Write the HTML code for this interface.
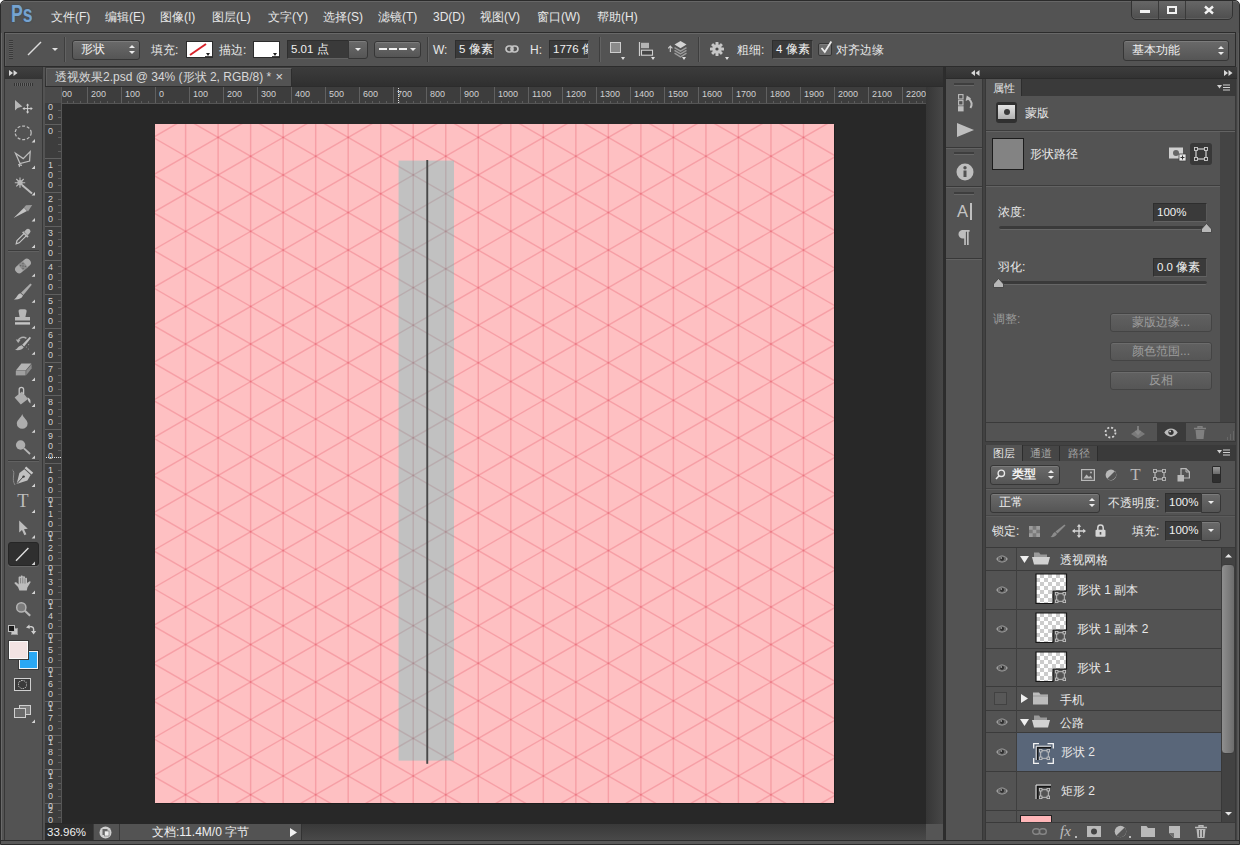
<!DOCTYPE html>
<html lang="zh">
<head>
<meta charset="utf-8">
<title>Photoshop</title>
<style>
*{box-sizing:border-box;margin:0;padding:0}
html,body{width:1240px;height:845px;overflow:hidden;background:#fff;font-family:"Liberation Sans",sans-serif}
body{font-family:"Liberation Sans",sans-serif;font-size:12px;color:#e6e6e6;position:relative}
.abs{position:absolute}
#win{position:absolute;left:0;top:0;width:1240px;height:845px;background:#535353;border-radius:5px 5px 0 0;overflow:hidden;border:1px solid #2b2b2b;box-shadow:inset 1px 1px 0 #6a6a6a,inset -1px 0 0 #5c5c5c}
#win>*{margin-left:-1px;margin-top:-1px}
.t{position:absolute;white-space:nowrap;line-height:14px;font-size:12px;color:#e8e8e8}
.dim{color:#9a9a9a}
.fld{position:absolute;background:#3a3a3a;border:1px solid #2e2e2e;border-bottom-color:#626262;border-right-color:#5a5a5a;color:#f0f0f0;font-size:11.5px;line-height:17px;padding-left:3px;white-space:nowrap;overflow:hidden}
.btn{position:absolute;border:1px solid #363636;border-radius:3px;background:linear-gradient(#6a6a6a,#555);box-shadow:inset 0 1px 0 #7c7c7c;color:#f0f0f0;font-size:12px;white-space:nowrap}
.sep{position:absolute;width:2px;border-left:1px solid #3e3e3e;border-right:1px solid #626262}
.hline{position:absolute;height:2px;border-top:1px solid #3c3c3c;border-bottom:1px solid #616161}
svg{position:absolute;overflow:visible}
.ud{position:absolute;width:7px;height:10px}
.ud:before,.ud:after{content:"";position:absolute;left:0;border-left:3.5px solid transparent;border-right:3.5px solid transparent}
.ud:before{top:0.5px;border-bottom:3.5px solid #ececec}
.ud:after{bottom:0.5px;border-top:3.5px solid #ececec}
.dn{position:absolute;width:0;height:0;border-left:3px solid transparent;border-right:3px solid transparent;border-top:3.5px solid #ececec}
.corner{position:absolute;width:0;height:0;border-left:4px solid transparent;border-bottom:4px solid #d0d0d0}
</style>
</head>
<body>
<div id="win">
<!-- ===== menu / title bar ===== -->
<div class="abs" style="left:1px;top:1px;width:1238px;height:32px;background:#535353;border-top:1px solid #666;border-radius:4px 4px 0 0"></div>
<div class="abs" style="left:11px;top:2px;font-size:23.5px;line-height:25px;font-weight:bold;color:#76a3d0;text-shadow:0 0 2px #2b425a;transform:scaleX(.75);transform-origin:0 0">Ps</div>
<div class="t" style="left:51px;top:10px">文件(F)</div>
<div class="t" style="left:105px;top:10px">编辑(E)</div>
<div class="t" style="left:160px;top:10px">图像(I)</div>
<div class="t" style="left:212px;top:10px">图层(L)</div>
<div class="t" style="left:268px;top:10px">文字(Y)</div>
<div class="t" style="left:323px;top:10px">选择(S)</div>
<div class="t" style="left:378px;top:10px">滤镜(T)</div>
<div class="t" style="left:433px;top:10px">3D(D)</div>
<div class="t" style="left:480px;top:10px">视图(V)</div>
<div class="t" style="left:537px;top:10px">窗口(W)</div>
<div class="t" style="left:597px;top:10px">帮助(H)</div>
<!-- window controls -->
<div class="abs" style="left:1131px;top:-1px;width:102px;height:21px;border:1px solid #333;border-radius:0 0 5px 5px;background:linear-gradient(#686868,#4e4e4e);box-shadow:inset 0 -1px 0 #5f5f5f"></div>
<div class="abs" style="left:1158px;top:0;width:1px;height:19px;background:#3a3a3a"></div>
<div class="abs" style="left:1185px;top:0;width:1px;height:19px;background:#3a3a3a"></div>
<div class="abs" style="left:1140px;top:10px;width:10px;height:3px;background:#f2f2f2"></div>
<div class="abs" style="left:1167px;top:6px;width:10px;height:8px;border:2px solid #f2f2f2"></div>
<svg style="left:1204px;top:6px" width="10" height="8" viewBox="0 0 10 8"><path d="M1 0.5 L9 7.5 M9 0.5 L1 7.5" stroke="#f2f2f2" stroke-width="2.4" fill="none"/></svg>
<!-- ===== options bar ===== -->
<div class="abs" style="left:4px;top:32px;width:1232px;height:35px;background:#535353;border:1px solid #2c2c2c;box-shadow:inset 0 1px 0 #686868,inset 1px 0 0 #5e5e5e"></div>
<div class="abs" style="left:9px;top:40px;width:4px;height:19px;background:repeating-linear-gradient(#3a3a3a 0 1px,#5e5e5e 1px 2px)"></div>
<svg style="left:27px;top:41px" width="15" height="15" viewBox="0 0 15 15"><path d="M1 14 L14 1" stroke="#dcdcdc" stroke-width="1.4"/></svg>
<div class="dn" style="left:52px;top:48px;border-top-color:#e0e0e0"></div>
<div class="sep" style="left:64px;top:37px;height:25px"></div>
<div class="btn" style="left:72px;top:40px;width:68px;height:20px;line-height:17px;padding-left:8px">形状</div>
<div class="ud" style="left:129px;top:44px"></div>
<div class="t" style="left:151px;top:43px">填充:</div>
<div class="abs" style="left:186px;top:41px;width:27px;height:17px;background:#fff;border:1px solid #2c2c2c"></div>
<svg style="left:188px;top:43px" width="20" height="13" viewBox="0 0 20 13"><path d="M2 12 L18 1" stroke="#d8232a" stroke-width="2"/></svg>
<div class="abs" style="left:205px;top:56px;width:7px;height:1px;background:#444"></div>
<div class="dn" style="left:206px;top:53px;border-width:3px 2.5px 0 2.5px;border-top-color:#222"></div>
<div class="t" style="left:219px;top:43px">描边:</div>
<div class="abs" style="left:253px;top:41px;width:27px;height:17px;background:#fff;border:1px solid #2c2c2c"></div>
<div class="abs" style="left:272px;top:56px;width:7px;height:1px;background:#444"></div>
<div class="dn" style="left:273px;top:53px;border-width:3px 2.5px 0 2.5px;border-top-color:#222"></div>
<div class="fld" style="left:287px;top:40px;width:62px;height:19px">5.01 点</div>
<div class="btn" style="left:348px;top:40px;width:20px;height:19px;border-radius:0 3px 3px 0"></div>
<div class="dn" style="left:355px;top:48px"></div>
<div class="btn" style="left:374px;top:41px;width:47px;height:17px"></div>
<div class="abs" style="left:379px;top:48px;width:28px;height:2px;background:repeating-linear-gradient(90deg,#f0f0f0 0 8px,transparent 8px 10px)"></div>
<div class="dn" style="left:410px;top:48px"></div>
<div class="sep" style="left:427px;top:37px;height:25px"></div>
<div class="t" style="left:433px;top:43px">W:</div>
<div class="fld" style="left:455px;top:40px;width:40px;height:19px">5 像素</div>
<svg style="left:505px;top:45px" width="14" height="8" viewBox="0 0 14 8"><rect x="1" y="1" width="7" height="6" rx="3" fill="none" stroke="#c4c4c4" stroke-width="1.7"/><rect x="6" y="1" width="7" height="6" rx="3" fill="none" stroke="#c4c4c4" stroke-width="1.7"/></svg>
<div class="t" style="left:530px;top:43px">H:</div>
<div class="fld" style="left:549px;top:40px;width:40px;height:19px">1776 像</div>
<div class="sep" style="left:599px;top:37px;height:25px"></div>
<!-- path ops icons -->
<div class="abs" style="left:610px;top:42px;width:11px;height:11px;background:#8a8a8a;border:1px solid #cdcdcd"></div>
<div class="dn" style="left:621px;top:57px;border-width:3px 2px 0 2px;border-top-color:#e0e0e0"></div>
<svg style="left:638px;top:41px" width="16" height="16" viewBox="0 0 16 16"><path d="M1.5 1 V15" stroke="#cfcfcf" stroke-width="1.2"/><rect x="3" y="1.8" width="8" height="5.4" fill="#b4b4b4"/><rect x="3.5" y="9.2" width="11" height="5" fill="#454545" stroke="#cfcfcf" stroke-width="1.1"/></svg>
<div class="dn" style="left:651px;top:57px;border-width:3px 2px 0 2px;border-top-color:#e0e0e0"></div>
<svg style="left:667px;top:40px" width="20" height="18" viewBox="0 0 20 18"><path d="M3.3 6 V12 M1.2 8.3 L3.3 6 L5.4 8.3" stroke="#cfcfcf" stroke-width="1.1" fill="none"/><path d="M13.5 1 L19.5 4.6 L13.5 8.2 L7.5 4.6Z" fill="#d4d4d4"/><path d="M7.5 7.6 L13.5 11.2 L19.5 7.6 M7.5 10.4 L13.5 14 L19.5 10.4 M7.5 13.2 L13.5 16.8 L19.5 13.2" fill="none" stroke="#9a9a9a" stroke-width="1.5"/></svg>
<div class="dn" style="left:682px;top:57px;border-width:3px 2px 0 2px;border-top-color:#e0e0e0"></div>
<div class="sep" style="left:698px;top:37px;height:25px"></div>
<!-- gear -->
<svg style="left:709px;top:41px" width="16" height="16" viewBox="0 0 16 16"><g transform="translate(8 8)"><circle r="4.6" fill="#c6c6c6"/><g fill="#c6c6c6"><rect x="-1.5" y="-7" width="3" height="14" rx=".6"/><rect x="-1.5" y="-7" width="3" height="14" rx=".6" transform="rotate(45)"/><rect x="-1.5" y="-7" width="3" height="14" rx=".6" transform="rotate(90)"/><rect x="-1.5" y="-7" width="3" height="14" rx=".6" transform="rotate(135)"/></g><circle r="1.6" fill="#4a4a4a"/></g></svg>
<div class="dn" style="left:725px;top:57px;border-width:3px 2px 0 2px;border-top-color:#e0e0e0"></div>
<div class="t" style="left:737px;top:43px">粗细:</div>
<div class="fld" style="left:772px;top:40px;width:41px;height:19px">4 像素</div>
<div class="abs" style="left:818px;top:43px;width:14px;height:13px;background:#6c6c6c;border:1px solid #363636;border-radius:2px;box-shadow:inset 0 1px 0 #7d7d7d"></div>
<svg style="left:819px;top:40px" width="14" height="15" viewBox="0 0 14 15"><path d="M2.5 8 L5.8 12 L12.3 1.5" fill="none" stroke="#ececec" stroke-width="1.8"/></svg>
<div class="t" style="left:836px;top:43px">对齐边缘</div>
<div class="btn" style="left:1123px;top:40px;width:106px;height:21px;line-height:18px;padding-left:8px">基本功能</div>
<div class="ud" style="left:1218px;top:45px"></div>
<!-- ===== left toolbar ===== -->
<div class="abs" style="left:4px;top:67px;width:39px;height:774px;background:#535353;border:1px solid #383838"></div>
<div class="abs" style="left:5px;top:67px;width:37px;height:12px;background:linear-gradient(#404040,#343434)"></div>
<svg style="left:9px;top:70px" width="9" height="6" viewBox="0 0 9 6"><path d="M0 0L4 3L0 6Z M4.5 0L8.5 3L4.5 6Z" fill="#d8d8d8"/></svg>
<div class="abs" style="left:14px;top:83px;width:19px;height:3px;background:repeating-linear-gradient(90deg,#333 0 1px,#666 1px 2px)"></div>
<div class="hline" style="left:8px;top:250px;width:31px"></div>
<div class="hline" style="left:8px;top:460px;width:31px"></div>
<div class="abs" style="left:8px;top:542px;width:31px;height:24px;background:#2f2f2f;border:1px solid #262626;border-radius:3px;box-shadow:0 1px 0 #676767"></div>
<svg style="left:0;top:0" width="45" height="845" viewBox="0 0 45 845">
<g fill="#b7b7b7" stroke="none">
<!-- move -->
<path d="M15 100 L15 110.4 L17.6 108 L22.4 106.6Z"/>
<path d="M27.6 104.4 V112.8 M23.4 108.6 H31.8" stroke="#d0d0d0" stroke-width="1" fill="none"/>
<path d="M27.6 103.4 L26 105.6 H29.2Z M27.6 113.8 L26 111.6 H29.2Z M22.4 108.6 L24.6 107 V110.2Z M32.8 108.6 L30.6 107 V110.2Z" fill="#d0d0d0"/>
<!-- ellipse marquee -->
<ellipse cx="23.2" cy="132.8" rx="8" ry="6.8" fill="none" stroke="#bdbdbd" stroke-width="1.25" stroke-dasharray="3 1.8"/>
<!-- poly lasso -->
<path d="M15.5 153.3 L23.2 158.6 L30.2 151.6 L29.6 161 L20 163.6 Z" fill="none" stroke="#bdbdbd" stroke-width="1.25"/>
<path d="M20 163.6 L19.2 167 M18 164.6 L22 165.4" fill="none" stroke="#bdbdbd" stroke-width="1.1"/>
<!-- wand -->
<path d="M22 185 L32 193.4" stroke="#bdbdbd" stroke-width="2" fill="none"/>
<path d="M20 177.6 V187.8 M14.8 182.7 H25.2 M16.3 179 L23.7 186.4 M23.7 179 L16.3 186.4" stroke="#bdbdbd" stroke-width="1.1" fill="none"/>
<circle cx="20" cy="182.7" r="2.6"/>
<!-- slice knife -->
<path d="M13.6 218 L24 207.8 L27 211 Z" fill="#c4c4c4"/>
<path d="M24 207.4 L26 205.2 L32.2 205 L28 211.4 Z" fill="#9a9a9a"/>
<!-- eyedropper -->
<path d="M26.2 229.6 a2.4 2.4 0 0 1 3.6 3.4 L27.8 235.2 L24.2 231.8Z"/>
<path d="M22.6 231.8 L28 237" stroke="#b7b7b7" stroke-width="1.8" fill="none"/>
<path d="M24 233.6 L17 240.6 L16.2 243.8 L19.2 242.8 L26.2 235.8" fill="none" stroke="#c4c4c4" stroke-width="1.2"/>
<!-- healing -->
<g transform="rotate(-40 23 266)"><rect x="14" y="262" width="18" height="8" rx="4" fill="#aaaaaa"/><rect x="20" y="262" width="6" height="8" fill="#8c8c8c"/><g fill="#5a5a5a"><circle cx="21.6" cy="264.2" r=".6"/><circle cx="24.4" cy="264.2" r=".6"/><circle cx="21.6" cy="267.8" r=".6"/><circle cx="24.4" cy="267.8" r=".6"/><circle cx="23" cy="266" r=".6"/></g></g>
<!-- brush -->
<path d="M30.4 283.4 L31.8 284.8 L23.4 295 L21 292.8Z" fill="#aaaaaa"/>
<path d="M20.4 293.2 L23 295.6 C21.5 299.4 17 300 13.8 299.4 C16.6 298.6 17 294.4 20.4 293.2Z" fill="#c0c0c0"/>
<!-- stamp -->
<path d="M20.8 309.2 h3.6 a2.2 2.2 0 0 1 2.2 2.4 L25.4 317 h4.6 v3.6 h-15 v-3.6 h4.6 L18.6 311.6 a2.2 2.2 0 0 1 2.2 -2.4Z"/>
<rect x="15" y="322.2" width="15" height="2.4" fill="#c4c4c4"/>
<!-- history brush -->
<path d="M29.8 336.8 L31 338 L24.2 346.6 L22.2 344.8Z" fill="#c0c0c0"/>
<path d="M21.6 345.2 L23.8 347.2 C22.5 350 18 350.6 14.8 349.8 C17.6 349 18 346 21.6 345.2Z"/>
<path d="M18 341 A5.4 5.4 0 0 1 26.4 338.4" fill="none" stroke="#b0b0b0" stroke-width="1.4"/>
<path d="M15.8 339.6 L18.2 343 L20.6 339.8Z" fill="#b0b0b0"/>
<circle cx="26.4" cy="347" r=".6" fill="#999"/><circle cx="28.6" cy="344.6" r=".6" fill="#999"/><circle cx="28.4" cy="349" r=".6" fill="#999"/>
<!-- eraser -->
<path d="M21.4 363.6 L31.4 363.6 L25.6 370.4 L15.8 370.4Z" fill="#b4b4b4"/>
<path d="M15.8 371 L25.6 371 L25.6 375.4 L15.8 375.4Z" fill="#a0a0a0"/>
<path d="M26.2 370.6 L31.6 364.2 L31.6 368.4 L26.2 375.2Z" fill="#8a8a8a"/>
<!-- bucket -->
<path d="M14.6 397.4 L22 391.6 L28 399 L20.8 404.6Z" fill="#adadad"/>
<path d="M19.2 394.4 V389.6 a2.2 2.2 0 0 1 4.4 0 V394" fill="none" stroke="#c4c4c4" stroke-width="1.3"/>
<path d="M27.4 397.4 C30.4 398.2 30.8 400.6 30.4 403.4 C28.6 402 27.8 400 27.4 397.4Z" fill="#c4c4c4"/>
<!-- blur drop -->
<path d="M22.2 414 C23.4 418 27.6 420 27.6 423.4 A5.4 5.4 0 0 1 16.8 423.4 C16.8 420 21 418 22.2 414Z" fill="#aeaeae"/>
<!-- dodge -->
<circle cx="20.6" cy="445" r="4.7" fill="#aeaeae"/>
<path d="M24 448.4 L30 454" stroke="#b7b7b7" stroke-width="1.8" fill="none"/>
<!-- pen -->
<path d="M16.6 484 L19.4 473 L24.4 469.2 L30.6 475 L27.4 480.6 Z" fill="#c0c0c0"/>
<path d="M25.4 467.4 L32.4 473.6" stroke="#c8c8c8" stroke-width="2.4" fill="none"/>
<path d="M17 483.6 L23.4 476.6" stroke="#4a4a4a" stroke-width="1" fill="none"/>
<circle cx="23.6" cy="476.6" r="1.2" fill="#3e3e3e"/>
<path d="M12.4 470 C16 472 11 479 15 485" fill="none" stroke="#8a8a8a" stroke-width="1"/>
<!-- path select arrow -->
<path d="M19.2 520.6 L19.2 532.6 L22 530 L24.4 535.2 L26.4 534.2 L24 529.2 L27.8 528.8Z" fill="#bdbdbd"/>
<!-- line tool -->
<path d="M16 560.8 L28.4 548" stroke="#dedede" stroke-width="1.4" fill="none"/>
<!-- hand -->
<path d="M19.4 590.6 L18 587 L14.6 583.6 C14.2 582.4 15.6 581.8 16.6 582.6 L18.6 584.4 V577.6 C18.6 576.2 20.6 576.2 20.6 577.6 V576.6 C20.6 575.2 22.8 575.2 22.8 576.6 V577.2 C22.8 575.8 25 575.8 25 577.2 V578.6 C25 577.4 27 577.4 27 578.6 V583 L29.4 581.4 C30.4 580.8 31 581.8 30.4 582.6 L27.4 587.4 L26.8 590.6Z" fill="#bdbdbd"/>
<path d="M20.6 578 V583.4 M22.8 577.4 V583.4 M25 578.4 V583.6" stroke="#6a6a6a" stroke-width=".7" fill="none"/>
<!-- zoom -->
<circle cx="21.3" cy="607.4" r="4.6" fill="#7c7c7c" stroke="#b4b4b4" stroke-width="1.5"/>
<path d="M24.8 610.8 L30.2 615.8" stroke="#b7b7b7" stroke-width="2.2" fill="none"/>
<!-- corner marks -->
<g fill="#d4d4d4">
<path d="M35 139 V142.4 H31.6Z"/><path d="M35 165.6 V169 H31.6Z"/><path d="M35 192 V195.4 H31.6Z"/><path d="M35 218 V221.4 H31.6Z"/><path d="M35 244.6 V248 H31.6Z"/>
<path d="M35 273.4 V276.8 H31.6Z"/><path d="M35 299.4 V302.8 H31.6Z"/><path d="M35 325.4 V328.8 H31.6Z"/><path d="M35 351.4 V354.8 H31.6Z"/><path d="M35 377.6 V381 H31.6Z"/><path d="M35 403.6 V407 H31.6Z"/>
<path d="M35 429.4 V432.8 H31.6Z"/><path d="M35 455.4 V458.8 H31.6Z"/><path d="M35 483.6 V487 H31.6Z"/><path d="M35 509.6 V513 H31.6Z"/><path d="M35 535 V538.4 H31.6Z"/><path d="M35 561.6 V565 H31.6Z"/><path d="M35 590.6 V594 H31.6Z"/><path d="M35 719.6 V723 H31.6Z"/>
</g>
</g>
</svg>
<!-- type -->
<div class="abs" style="left:13px;top:492px;width:20px;height:19px;font-family:'Liberation Serif',serif;font-size:18.5px;line-height:19px;color:#bdbdbd;text-align:center">T</div>
<!-- default/swap colors -->
<div class="abs" style="left:11px;top:628px;width:7px;height:7px;background:#c8c8c8;border:1px solid #999"></div>
<div class="abs" style="left:8px;top:625px;width:7px;height:7px;background:#1a1a1a;border:1px solid #bdbdbd"></div>
<svg style="left:26px;top:624px" width="11" height="11" viewBox="0 0 11 11"><path d="M2.4 3.4 C4 2 7.6 2.4 7.6 5 V8" fill="none" stroke="#cdcdcd" stroke-width="1.4"/><path d="M0 3.6 L3.4 0.6 L3.8 4.8Z M5 7 L7.6 10.4 L10.2 7Z" fill="#cdcdcd"/></svg>
<!-- fg/bg swatches -->
<div class="abs" style="left:19px;top:651px;width:19px;height:18px;background:#2aa8f4;border:1px solid #f4f4f4;box-shadow:0 0 0 1px #3a3a3a"></div>
<div class="abs" style="left:9px;top:641px;width:19px;height:18px;background:#f3e3e3;border:1px solid #fbfbfb;box-shadow:0 0 0 1px #3a3a3a"></div>
<!-- quick mask -->
<div class="abs" style="left:14px;top:678px;width:17px;height:13px;border:1px solid #d0d0d0;background:#3a3a3a"></div>
<div class="abs" style="left:18px;top:680px;width:9px;height:9px;border:1px dotted #dcdcdc;border-radius:50%"></div>
<!-- screen mode -->
<div class="abs" style="left:19px;top:705px;width:12px;height:10px;background:#7c7c7c;border:1px solid #d0d0d0"></div>
<div class="abs" style="left:14px;top:708px;width:12px;height:10px;background:#6a6a6a;border:1px solid #d0d0d0"></div>
<!-- ===== document window ===== -->
<div class="abs" style="left:45px;top:67px;width:898px;height:20px;background:linear-gradient(#3c3c3c,#2f2f2f)"></div>
<div class="abs" style="left:46px;top:68px;width:246px;height:19px;background:#535353;border-left:1px solid #5f5f5f;border-top:1px solid #646464;border-right:1px solid #2d2d2d"></div>
<div class="t" style="left:55px;top:70px;font-size:12px;color:#d8d8d8">透视效果2.psd @ 34% (形状 2, RGB/8) * <span style="font-size:13px;padding-left:1px">×</span></div>
<div class="abs" style="left:45px;top:86px;width:900px;height:1px;background:#2c2c2c;z-index:2"></div>
<div class="abs" style="left:45px;top:87px;width:900px;height:754px;background:#282828"></div>
<div class="abs" style="left:45px;top:87px;width:881px;height:17px;background:#3d3d3d;border-bottom:1px solid #555"></div>
<div class="abs" style="left:45px;top:87px;width:17px;height:736px;background:#3d3d3d;border-right:1px solid #555"></div>
<div class="abs" style="left:45px;top:87px;width:16px;height:16px;background:#4a4a4a"></div>
<svg style="left:0;top:0" width="1240" height="845" viewBox="0 0 1240 845" shape-rendering="crispEdges">
<path d="M67.5 101 V103" stroke="#5c5c5c" stroke-width="1"/>
<path d="M73.5 101 V103" stroke="#5c5c5c" stroke-width="1"/>
<path d="M80.5 101 V103" stroke="#5c5c5c" stroke-width="1"/>
<path d="M87.5 87 V103" stroke="#606060" stroke-width="1"/>
<path d="M94.5 101 V103" stroke="#5c5c5c" stroke-width="1"/>
<path d="M100.5 101 V103" stroke="#5c5c5c" stroke-width="1"/>
<path d="M107.5 101 V103" stroke="#5c5c5c" stroke-width="1"/>
<path d="M114.5 101 V103" stroke="#5c5c5c" stroke-width="1"/>
<path d="M121.5 87 V103" stroke="#606060" stroke-width="1"/>
<path d="M128.5 101 V103" stroke="#5c5c5c" stroke-width="1"/>
<path d="M134.5 101 V103" stroke="#5c5c5c" stroke-width="1"/>
<path d="M141.5 101 V103" stroke="#5c5c5c" stroke-width="1"/>
<path d="M148.5 101 V103" stroke="#5c5c5c" stroke-width="1"/>
<path d="M155.5 87 V103" stroke="#606060" stroke-width="1"/>
<path d="M162.5 101 V103" stroke="#5c5c5c" stroke-width="1"/>
<path d="M168.5 101 V103" stroke="#5c5c5c" stroke-width="1"/>
<path d="M175.5 101 V103" stroke="#5c5c5c" stroke-width="1"/>
<path d="M182.5 101 V103" stroke="#5c5c5c" stroke-width="1"/>
<path d="M189.5 87 V103" stroke="#606060" stroke-width="1"/>
<path d="M196.5 101 V103" stroke="#5c5c5c" stroke-width="1"/>
<path d="M202.5 101 V103" stroke="#5c5c5c" stroke-width="1"/>
<path d="M209.5 101 V103" stroke="#5c5c5c" stroke-width="1"/>
<path d="M216.5 101 V103" stroke="#5c5c5c" stroke-width="1"/>
<path d="M223.5 87 V103" stroke="#606060" stroke-width="1"/>
<path d="M230.5 101 V103" stroke="#5c5c5c" stroke-width="1"/>
<path d="M236.5 101 V103" stroke="#5c5c5c" stroke-width="1"/>
<path d="M243.5 101 V103" stroke="#5c5c5c" stroke-width="1"/>
<path d="M250.5 101 V103" stroke="#5c5c5c" stroke-width="1"/>
<path d="M257.5 87 V103" stroke="#606060" stroke-width="1"/>
<path d="M263.5 101 V103" stroke="#5c5c5c" stroke-width="1"/>
<path d="M270.5 101 V103" stroke="#5c5c5c" stroke-width="1"/>
<path d="M277.5 101 V103" stroke="#5c5c5c" stroke-width="1"/>
<path d="M284.5 101 V103" stroke="#5c5c5c" stroke-width="1"/>
<path d="M291.5 87 V103" stroke="#606060" stroke-width="1"/>
<path d="M297.5 101 V103" stroke="#5c5c5c" stroke-width="1"/>
<path d="M304.5 101 V103" stroke="#5c5c5c" stroke-width="1"/>
<path d="M311.5 101 V103" stroke="#5c5c5c" stroke-width="1"/>
<path d="M318.5 101 V103" stroke="#5c5c5c" stroke-width="1"/>
<path d="M325.5 87 V103" stroke="#606060" stroke-width="1"/>
<path d="M331.5 101 V103" stroke="#5c5c5c" stroke-width="1"/>
<path d="M338.5 101 V103" stroke="#5c5c5c" stroke-width="1"/>
<path d="M345.5 101 V103" stroke="#5c5c5c" stroke-width="1"/>
<path d="M352.5 101 V103" stroke="#5c5c5c" stroke-width="1"/>
<path d="M359.5 87 V103" stroke="#606060" stroke-width="1"/>
<path d="M365.5 101 V103" stroke="#5c5c5c" stroke-width="1"/>
<path d="M372.5 101 V103" stroke="#5c5c5c" stroke-width="1"/>
<path d="M379.5 101 V103" stroke="#5c5c5c" stroke-width="1"/>
<path d="M386.5 101 V103" stroke="#5c5c5c" stroke-width="1"/>
<path d="M393.5 87 V103" stroke="#606060" stroke-width="1"/>
<path d="M399.5 101 V103" stroke="#5c5c5c" stroke-width="1"/>
<path d="M406.5 101 V103" stroke="#5c5c5c" stroke-width="1"/>
<path d="M413.5 101 V103" stroke="#5c5c5c" stroke-width="1"/>
<path d="M420.5 101 V103" stroke="#5c5c5c" stroke-width="1"/>
<path d="M426.5 87 V103" stroke="#606060" stroke-width="1"/>
<path d="M433.5 101 V103" stroke="#5c5c5c" stroke-width="1"/>
<path d="M440.5 101 V103" stroke="#5c5c5c" stroke-width="1"/>
<path d="M447.5 101 V103" stroke="#5c5c5c" stroke-width="1"/>
<path d="M454.5 101 V103" stroke="#5c5c5c" stroke-width="1"/>
<path d="M460.5 87 V103" stroke="#606060" stroke-width="1"/>
<path d="M467.5 101 V103" stroke="#5c5c5c" stroke-width="1"/>
<path d="M474.5 101 V103" stroke="#5c5c5c" stroke-width="1"/>
<path d="M481.5 101 V103" stroke="#5c5c5c" stroke-width="1"/>
<path d="M488.5 101 V103" stroke="#5c5c5c" stroke-width="1"/>
<path d="M494.5 87 V103" stroke="#606060" stroke-width="1"/>
<path d="M501.5 101 V103" stroke="#5c5c5c" stroke-width="1"/>
<path d="M508.5 101 V103" stroke="#5c5c5c" stroke-width="1"/>
<path d="M515.5 101 V103" stroke="#5c5c5c" stroke-width="1"/>
<path d="M522.5 101 V103" stroke="#5c5c5c" stroke-width="1"/>
<path d="M528.5 87 V103" stroke="#606060" stroke-width="1"/>
<path d="M535.5 101 V103" stroke="#5c5c5c" stroke-width="1"/>
<path d="M542.5 101 V103" stroke="#5c5c5c" stroke-width="1"/>
<path d="M549.5 101 V103" stroke="#5c5c5c" stroke-width="1"/>
<path d="M556.5 101 V103" stroke="#5c5c5c" stroke-width="1"/>
<path d="M562.5 87 V103" stroke="#606060" stroke-width="1"/>
<path d="M569.5 101 V103" stroke="#5c5c5c" stroke-width="1"/>
<path d="M576.5 101 V103" stroke="#5c5c5c" stroke-width="1"/>
<path d="M583.5 101 V103" stroke="#5c5c5c" stroke-width="1"/>
<path d="M589.5 101 V103" stroke="#5c5c5c" stroke-width="1"/>
<path d="M596.5 87 V103" stroke="#606060" stroke-width="1"/>
<path d="M603.5 101 V103" stroke="#5c5c5c" stroke-width="1"/>
<path d="M610.5 101 V103" stroke="#5c5c5c" stroke-width="1"/>
<path d="M617.5 101 V103" stroke="#5c5c5c" stroke-width="1"/>
<path d="M623.5 101 V103" stroke="#5c5c5c" stroke-width="1"/>
<path d="M630.5 87 V103" stroke="#606060" stroke-width="1"/>
<path d="M637.5 101 V103" stroke="#5c5c5c" stroke-width="1"/>
<path d="M644.5 101 V103" stroke="#5c5c5c" stroke-width="1"/>
<path d="M651.5 101 V103" stroke="#5c5c5c" stroke-width="1"/>
<path d="M657.5 101 V103" stroke="#5c5c5c" stroke-width="1"/>
<path d="M664.5 87 V103" stroke="#606060" stroke-width="1"/>
<path d="M671.5 101 V103" stroke="#5c5c5c" stroke-width="1"/>
<path d="M678.5 101 V103" stroke="#5c5c5c" stroke-width="1"/>
<path d="M685.5 101 V103" stroke="#5c5c5c" stroke-width="1"/>
<path d="M691.5 101 V103" stroke="#5c5c5c" stroke-width="1"/>
<path d="M698.5 87 V103" stroke="#606060" stroke-width="1"/>
<path d="M705.5 101 V103" stroke="#5c5c5c" stroke-width="1"/>
<path d="M712.5 101 V103" stroke="#5c5c5c" stroke-width="1"/>
<path d="M719.5 101 V103" stroke="#5c5c5c" stroke-width="1"/>
<path d="M725.5 101 V103" stroke="#5c5c5c" stroke-width="1"/>
<path d="M732.5 87 V103" stroke="#606060" stroke-width="1"/>
<path d="M739.5 101 V103" stroke="#5c5c5c" stroke-width="1"/>
<path d="M746.5 101 V103" stroke="#5c5c5c" stroke-width="1"/>
<path d="M752.5 101 V103" stroke="#5c5c5c" stroke-width="1"/>
<path d="M759.5 101 V103" stroke="#5c5c5c" stroke-width="1"/>
<path d="M766.5 87 V103" stroke="#606060" stroke-width="1"/>
<path d="M773.5 101 V103" stroke="#5c5c5c" stroke-width="1"/>
<path d="M780.5 101 V103" stroke="#5c5c5c" stroke-width="1"/>
<path d="M786.5 101 V103" stroke="#5c5c5c" stroke-width="1"/>
<path d="M793.5 101 V103" stroke="#5c5c5c" stroke-width="1"/>
<path d="M800.5 87 V103" stroke="#606060" stroke-width="1"/>
<path d="M807.5 101 V103" stroke="#5c5c5c" stroke-width="1"/>
<path d="M814.5 101 V103" stroke="#5c5c5c" stroke-width="1"/>
<path d="M820.5 101 V103" stroke="#5c5c5c" stroke-width="1"/>
<path d="M827.5 101 V103" stroke="#5c5c5c" stroke-width="1"/>
<path d="M834.5 87 V103" stroke="#606060" stroke-width="1"/>
<path d="M841.5 101 V103" stroke="#5c5c5c" stroke-width="1"/>
<path d="M848.5 101 V103" stroke="#5c5c5c" stroke-width="1"/>
<path d="M854.5 101 V103" stroke="#5c5c5c" stroke-width="1"/>
<path d="M861.5 101 V103" stroke="#5c5c5c" stroke-width="1"/>
<path d="M868.5 87 V103" stroke="#606060" stroke-width="1"/>
<path d="M875.5 101 V103" stroke="#5c5c5c" stroke-width="1"/>
<path d="M882.5 101 V103" stroke="#5c5c5c" stroke-width="1"/>
<path d="M888.5 101 V103" stroke="#5c5c5c" stroke-width="1"/>
<path d="M895.5 101 V103" stroke="#5c5c5c" stroke-width="1"/>
<path d="M902.5 87 V103" stroke="#606060" stroke-width="1"/>
<path d="M909.5 101 V103" stroke="#5c5c5c" stroke-width="1"/>
<path d="M916.5 101 V103" stroke="#5c5c5c" stroke-width="1"/>
<path d="M922.5 101 V103" stroke="#5c5c5c" stroke-width="1"/>
<path d="M58 110.5 H61" stroke="#5c5c5c" stroke-width="1"/>
<path d="M58 117.5 H61" stroke="#5c5c5c" stroke-width="1"/>
<path d="M45 124.5 H61" stroke="#606060" stroke-width="1"/>
<path d="M58 131.5 H61" stroke="#5c5c5c" stroke-width="1"/>
<path d="M58 137.5 H61" stroke="#5c5c5c" stroke-width="1"/>
<path d="M58 144.5 H61" stroke="#5c5c5c" stroke-width="1"/>
<path d="M58 151.5 H61" stroke="#5c5c5c" stroke-width="1"/>
<path d="M45 158.5 H61" stroke="#606060" stroke-width="1"/>
<path d="M58 165.5 H61" stroke="#5c5c5c" stroke-width="1"/>
<path d="M58 171.5 H61" stroke="#5c5c5c" stroke-width="1"/>
<path d="M58 178.5 H61" stroke="#5c5c5c" stroke-width="1"/>
<path d="M58 185.5 H61" stroke="#5c5c5c" stroke-width="1"/>
<path d="M45 192.5 H61" stroke="#606060" stroke-width="1"/>
<path d="M58 199.5 H61" stroke="#5c5c5c" stroke-width="1"/>
<path d="M58 205.5 H61" stroke="#5c5c5c" stroke-width="1"/>
<path d="M58 212.5 H61" stroke="#5c5c5c" stroke-width="1"/>
<path d="M58 219.5 H61" stroke="#5c5c5c" stroke-width="1"/>
<path d="M45 226.5 H61" stroke="#606060" stroke-width="1"/>
<path d="M58 232.5 H61" stroke="#5c5c5c" stroke-width="1"/>
<path d="M58 239.5 H61" stroke="#5c5c5c" stroke-width="1"/>
<path d="M58 246.5 H61" stroke="#5c5c5c" stroke-width="1"/>
<path d="M58 253.5 H61" stroke="#5c5c5c" stroke-width="1"/>
<path d="M45 260.5 H61" stroke="#606060" stroke-width="1"/>
<path d="M58 266.5 H61" stroke="#5c5c5c" stroke-width="1"/>
<path d="M58 273.5 H61" stroke="#5c5c5c" stroke-width="1"/>
<path d="M58 280.5 H61" stroke="#5c5c5c" stroke-width="1"/>
<path d="M58 287.5 H61" stroke="#5c5c5c" stroke-width="1"/>
<path d="M45 294.5 H61" stroke="#606060" stroke-width="1"/>
<path d="M58 300.5 H61" stroke="#5c5c5c" stroke-width="1"/>
<path d="M58 307.5 H61" stroke="#5c5c5c" stroke-width="1"/>
<path d="M58 314.5 H61" stroke="#5c5c5c" stroke-width="1"/>
<path d="M58 321.5 H61" stroke="#5c5c5c" stroke-width="1"/>
<path d="M45 328.5 H61" stroke="#606060" stroke-width="1"/>
<path d="M58 334.5 H61" stroke="#5c5c5c" stroke-width="1"/>
<path d="M58 341.5 H61" stroke="#5c5c5c" stroke-width="1"/>
<path d="M58 348.5 H61" stroke="#5c5c5c" stroke-width="1"/>
<path d="M58 355.5 H61" stroke="#5c5c5c" stroke-width="1"/>
<path d="M45 362.5 H61" stroke="#606060" stroke-width="1"/>
<path d="M58 368.5 H61" stroke="#5c5c5c" stroke-width="1"/>
<path d="M58 375.5 H61" stroke="#5c5c5c" stroke-width="1"/>
<path d="M58 382.5 H61" stroke="#5c5c5c" stroke-width="1"/>
<path d="M58 389.5 H61" stroke="#5c5c5c" stroke-width="1"/>
<path d="M45 395.5 H61" stroke="#606060" stroke-width="1"/>
<path d="M58 402.5 H61" stroke="#5c5c5c" stroke-width="1"/>
<path d="M58 409.5 H61" stroke="#5c5c5c" stroke-width="1"/>
<path d="M58 416.5 H61" stroke="#5c5c5c" stroke-width="1"/>
<path d="M58 423.5 H61" stroke="#5c5c5c" stroke-width="1"/>
<path d="M45 429.5 H61" stroke="#606060" stroke-width="1"/>
<path d="M58 436.5 H61" stroke="#5c5c5c" stroke-width="1"/>
<path d="M58 443.5 H61" stroke="#5c5c5c" stroke-width="1"/>
<path d="M58 450.5 H61" stroke="#5c5c5c" stroke-width="1"/>
<path d="M58 457.5 H61" stroke="#5c5c5c" stroke-width="1"/>
<path d="M45 463.5 H61" stroke="#606060" stroke-width="1"/>
<path d="M58 470.5 H61" stroke="#5c5c5c" stroke-width="1"/>
<path d="M58 477.5 H61" stroke="#5c5c5c" stroke-width="1"/>
<path d="M58 484.5 H61" stroke="#5c5c5c" stroke-width="1"/>
<path d="M58 491.5 H61" stroke="#5c5c5c" stroke-width="1"/>
<path d="M45 497.5 H61" stroke="#606060" stroke-width="1"/>
<path d="M58 504.5 H61" stroke="#5c5c5c" stroke-width="1"/>
<path d="M58 511.5 H61" stroke="#5c5c5c" stroke-width="1"/>
<path d="M58 518.5 H61" stroke="#5c5c5c" stroke-width="1"/>
<path d="M58 525.5 H61" stroke="#5c5c5c" stroke-width="1"/>
<path d="M45 531.5 H61" stroke="#606060" stroke-width="1"/>
<path d="M58 538.5 H61" stroke="#5c5c5c" stroke-width="1"/>
<path d="M58 545.5 H61" stroke="#5c5c5c" stroke-width="1"/>
<path d="M58 552.5 H61" stroke="#5c5c5c" stroke-width="1"/>
<path d="M58 558.5 H61" stroke="#5c5c5c" stroke-width="1"/>
<path d="M45 565.5 H61" stroke="#606060" stroke-width="1"/>
<path d="M58 572.5 H61" stroke="#5c5c5c" stroke-width="1"/>
<path d="M58 579.5 H61" stroke="#5c5c5c" stroke-width="1"/>
<path d="M58 586.5 H61" stroke="#5c5c5c" stroke-width="1"/>
<path d="M58 592.5 H61" stroke="#5c5c5c" stroke-width="1"/>
<path d="M45 599.5 H61" stroke="#606060" stroke-width="1"/>
<path d="M58 606.5 H61" stroke="#5c5c5c" stroke-width="1"/>
<path d="M58 613.5 H61" stroke="#5c5c5c" stroke-width="1"/>
<path d="M58 620.5 H61" stroke="#5c5c5c" stroke-width="1"/>
<path d="M58 626.5 H61" stroke="#5c5c5c" stroke-width="1"/>
<path d="M45 633.5 H61" stroke="#606060" stroke-width="1"/>
<path d="M58 640.5 H61" stroke="#5c5c5c" stroke-width="1"/>
<path d="M58 647.5 H61" stroke="#5c5c5c" stroke-width="1"/>
<path d="M58 654.5 H61" stroke="#5c5c5c" stroke-width="1"/>
<path d="M58 660.5 H61" stroke="#5c5c5c" stroke-width="1"/>
<path d="M45 667.5 H61" stroke="#606060" stroke-width="1"/>
<path d="M58 674.5 H61" stroke="#5c5c5c" stroke-width="1"/>
<path d="M58 681.5 H61" stroke="#5c5c5c" stroke-width="1"/>
<path d="M58 688.5 H61" stroke="#5c5c5c" stroke-width="1"/>
<path d="M58 694.5 H61" stroke="#5c5c5c" stroke-width="1"/>
<path d="M45 701.5 H61" stroke="#606060" stroke-width="1"/>
<path d="M58 708.5 H61" stroke="#5c5c5c" stroke-width="1"/>
<path d="M58 715.5 H61" stroke="#5c5c5c" stroke-width="1"/>
<path d="M58 721.5 H61" stroke="#5c5c5c" stroke-width="1"/>
<path d="M58 728.5 H61" stroke="#5c5c5c" stroke-width="1"/>
<path d="M45 735.5 H61" stroke="#606060" stroke-width="1"/>
<path d="M58 742.5 H61" stroke="#5c5c5c" stroke-width="1"/>
<path d="M58 749.5 H61" stroke="#5c5c5c" stroke-width="1"/>
<path d="M58 755.5 H61" stroke="#5c5c5c" stroke-width="1"/>
<path d="M58 762.5 H61" stroke="#5c5c5c" stroke-width="1"/>
<path d="M45 769.5 H61" stroke="#606060" stroke-width="1"/>
<path d="M58 776.5 H61" stroke="#5c5c5c" stroke-width="1"/>
<path d="M58 783.5 H61" stroke="#5c5c5c" stroke-width="1"/>
<path d="M58 789.5 H61" stroke="#5c5c5c" stroke-width="1"/>
<path d="M58 796.5 H61" stroke="#5c5c5c" stroke-width="1"/>
<path d="M45 803.5 H61" stroke="#606060" stroke-width="1"/>
<path d="M58 810.5 H61" stroke="#5c5c5c" stroke-width="1"/>
<path d="M58 817.5 H61" stroke="#5c5c5c" stroke-width="1"/>
</svg>
<div class="abs" style="left:62px;top:87px;width:864px;height:16px;overflow:hidden;font-size:9px;line-height:10px;color:#d0d0d0">
<span class="abs" style="left:-5px;top:2px">300</span>
<span class="abs" style="left:29px;top:2px">200</span>
<span class="abs" style="left:63px;top:2px">100</span>
<span class="abs" style="left:97px;top:2px">0</span>
<span class="abs" style="left:131px;top:2px">100</span>
<span class="abs" style="left:165px;top:2px">200</span>
<span class="abs" style="left:199px;top:2px">300</span>
<span class="abs" style="left:233px;top:2px">400</span>
<span class="abs" style="left:267px;top:2px">500</span>
<span class="abs" style="left:301px;top:2px">600</span>
<span class="abs" style="left:335px;top:2px">700</span>
<span class="abs" style="left:368px;top:2px">800</span>
<span class="abs" style="left:402px;top:2px">900</span>
<span class="abs" style="left:436px;top:2px">1000</span>
<span class="abs" style="left:470px;top:2px">1100</span>
<span class="abs" style="left:504px;top:2px">1200</span>
<span class="abs" style="left:538px;top:2px">1300</span>
<span class="abs" style="left:572px;top:2px">1400</span>
<span class="abs" style="left:606px;top:2px">1500</span>
<span class="abs" style="left:640px;top:2px">1600</span>
<span class="abs" style="left:674px;top:2px">1700</span>
<span class="abs" style="left:708px;top:2px">1800</span>
<span class="abs" style="left:742px;top:2px">1900</span>
<span class="abs" style="left:776px;top:2px">2000</span>
<span class="abs" style="left:810px;top:2px">2100</span>
<span class="abs" style="left:844px;top:2px">2200</span>
<span class="abs" style="left:878px;top:2px">2300</span>
</div>
<div class="abs" style="left:45px;top:104px;width:16px;height:719px;overflow:hidden;font-size:9px;line-height:10px;color:#d0d0d0;text-align:left">
<span class="abs" style="left:3px;top:-12px;width:8px;line-height:10px;word-break:break-all">1<br>0<br>0</span>
<span class="abs" style="left:3px;top:22px;width:8px;line-height:10px;word-break:break-all">0</span>
<span class="abs" style="left:3px;top:56px;width:8px;line-height:10px;word-break:break-all">1<br>0<br>0</span>
<span class="abs" style="left:3px;top:90px;width:8px;line-height:10px;word-break:break-all">2<br>0<br>0</span>
<span class="abs" style="left:3px;top:124px;width:8px;line-height:10px;word-break:break-all">3<br>0<br>0</span>
<span class="abs" style="left:3px;top:158px;width:8px;line-height:10px;word-break:break-all">4<br>0<br>0</span>
<span class="abs" style="left:3px;top:192px;width:8px;line-height:10px;word-break:break-all">5<br>0<br>0</span>
<span class="abs" style="left:3px;top:226px;width:8px;line-height:10px;word-break:break-all">6<br>0<br>0</span>
<span class="abs" style="left:3px;top:260px;width:8px;line-height:10px;word-break:break-all">7<br>0<br>0</span>
<span class="abs" style="left:3px;top:293px;width:8px;line-height:10px;word-break:break-all">8<br>0<br>0</span>
<span class="abs" style="left:3px;top:327px;width:8px;line-height:10px;word-break:break-all">9<br>0<br>0</span>
<span class="abs" style="left:3px;top:361px;width:8px;line-height:10px;word-break:break-all">1<br>0<br>0<br>0</span>
<span class="abs" style="left:3px;top:395px;width:8px;line-height:10px;word-break:break-all">1<br>1<br>0<br>0</span>
<span class="abs" style="left:3px;top:429px;width:8px;line-height:10px;word-break:break-all">1<br>2<br>0<br>0</span>
<span class="abs" style="left:3px;top:463px;width:8px;line-height:10px;word-break:break-all">1<br>3<br>0<br>0</span>
<span class="abs" style="left:3px;top:497px;width:8px;line-height:10px;word-break:break-all">1<br>4<br>0<br>0</span>
<span class="abs" style="left:3px;top:531px;width:8px;line-height:10px;word-break:break-all">1<br>5<br>0<br>0</span>
<span class="abs" style="left:3px;top:565px;width:8px;line-height:10px;word-break:break-all">1<br>6<br>0<br>0</span>
<span class="abs" style="left:3px;top:599px;width:8px;line-height:10px;word-break:break-all">1<br>7<br>0<br>0</span>
<span class="abs" style="left:3px;top:633px;width:8px;line-height:10px;word-break:break-all">1<br>8<br>0<br>0</span>
<span class="abs" style="left:3px;top:667px;width:8px;line-height:10px;word-break:break-all">1<br>9<br>0<br>0</span>
<span class="abs" style="left:3px;top:701px;width:8px;line-height:10px;word-break:break-all">2<br>0<br>0<br>0</span>
<span class="abs" style="left:3px;top:735px;width:8px;line-height:10px;word-break:break-all">2<br>1<br>0<br>0</span>
</div>
<div class="abs" style="left:398px;top:88px;width:1px;height:15px;background:repeating-linear-gradient(#ddd 0 1px,transparent 1px 2px)"></div>
<div class="abs" style="left:46px;top:457px;width:15px;height:1px;background:repeating-linear-gradient(90deg,#ddd 0 1px,transparent 1px 2px)"></div>
<div class="abs" style="left:155px;top:124px;width:679px;height:679px;background:#fec0c2;overflow:hidden;box-shadow:1px 1px 0 #1e1e1e">
<svg style="left:0;top:0" width="679" height="679" viewBox="155 124 679 679">
<rect x="398.6" y="160.6" width="55.4" height="600" fill="#c1c1c1"/>
<defs><clipPath id="cin"><rect x="398.6" y="160.6" width="55.4" height="600"/></clipPath><clipPath id="cout"><path clip-rule="evenodd" d="M155 124 H834 V803 H155Z M398.6 160.6 H454 V760.6 H398.6Z"/></clipPath></defs>
<g stroke="rgba(222,50,72,0.23)" stroke-width="1.45" fill="none" clip-path="url(#cout)"><path d="M185.60 124 V803"/><path d="M218.12 124 V803"/><path d="M250.64 124 V803"/><path d="M283.16 124 V803"/><path d="M315.68 124 V803"/><path d="M348.20 124 V803"/><path d="M380.72 124 V803"/><path d="M413.24 124 V803"/><path d="M445.76 124 V803"/><path d="M478.28 124 V803"/><path d="M510.80 124 V803"/><path d="M543.32 124 V803"/><path d="M575.84 124 V803"/><path d="M608.36 124 V803"/><path d="M640.88 124 V803"/><path d="M673.40 124 V803"/><path d="M705.92 124 V803"/><path d="M738.44 124 V803"/><path d="M770.96 124 V803"/><path d="M803.48 124 V803"/><path d="M153 -238.23 L836 156.20"/><path d="M153 -200.67 L836 193.76"/><path d="M153 -163.11 L836 231.32"/><path d="M153 -125.55 L836 268.88"/><path d="M153 -87.99 L836 306.44"/><path d="M153 -50.43 L836 344.00"/><path d="M153 -12.87 L836 381.56"/><path d="M153 24.69 L836 419.12"/><path d="M153 62.25 L836 456.68"/><path d="M153 99.81 L836 494.24"/><path d="M153 137.47 L836 -256.96"/><path d="M153 137.37 L836 531.80"/><path d="M153 175.03 L836 -219.40"/><path d="M153 174.93 L836 569.36"/><path d="M153 212.59 L836 -181.84"/><path d="M153 212.49 L836 606.92"/><path d="M153 250.15 L836 -144.28"/><path d="M153 250.05 L836 644.48"/><path d="M153 287.71 L836 -106.72"/><path d="M153 287.61 L836 682.04"/><path d="M153 325.27 L836 -69.16"/><path d="M153 325.17 L836 719.60"/><path d="M153 362.83 L836 -31.60"/><path d="M153 362.73 L836 757.16"/><path d="M153 400.39 L836 5.96"/><path d="M153 400.29 L836 794.72"/><path d="M153 437.95 L836 43.52"/><path d="M153 437.85 L836 832.28"/><path d="M153 475.51 L836 81.08"/><path d="M153 475.41 L836 869.84"/><path d="M153 513.07 L836 118.64"/><path d="M153 512.97 L836 907.40"/><path d="M153 550.63 L836 156.20"/><path d="M153 550.53 L836 944.96"/><path d="M153 588.19 L836 193.76"/><path d="M153 588.09 L836 982.52"/><path d="M153 625.75 L836 231.32"/><path d="M153 625.65 L836 1020.08"/><path d="M153 663.31 L836 268.88"/><path d="M153 663.21 L836 1057.64"/><path d="M153 700.87 L836 306.44"/><path d="M153 700.77 L836 1095.20"/><path d="M153 738.43 L836 344.00"/><path d="M153 738.33 L836 1132.76"/><path d="M153 775.99 L836 381.56"/><path d="M153 775.89 L836 1170.32"/><path d="M153 813.55 L836 419.12"/><path d="M153 851.11 L836 456.68"/><path d="M153 888.67 L836 494.24"/><path d="M153 926.23 L836 531.80"/><path d="M153 963.79 L836 569.36"/><path d="M153 1001.35 L836 606.92"/><path d="M153 1038.91 L836 644.48"/><path d="M153 1076.47 L836 682.04"/><path d="M153 1114.03 L836 719.60"/><path d="M153 1151.59 L836 757.16"/><path d="M153 1189.15 L836 794.72"/></g>
<g stroke="rgba(150,78,92,0.19)" stroke-width="1.45" fill="none" clip-path="url(#cin)"><path d="M185.60 124 V803"/><path d="M218.12 124 V803"/><path d="M250.64 124 V803"/><path d="M283.16 124 V803"/><path d="M315.68 124 V803"/><path d="M348.20 124 V803"/><path d="M380.72 124 V803"/><path d="M413.24 124 V803"/><path d="M445.76 124 V803"/><path d="M478.28 124 V803"/><path d="M510.80 124 V803"/><path d="M543.32 124 V803"/><path d="M575.84 124 V803"/><path d="M608.36 124 V803"/><path d="M640.88 124 V803"/><path d="M673.40 124 V803"/><path d="M705.92 124 V803"/><path d="M738.44 124 V803"/><path d="M770.96 124 V803"/><path d="M803.48 124 V803"/><path d="M153 -238.23 L836 156.20"/><path d="M153 -200.67 L836 193.76"/><path d="M153 -163.11 L836 231.32"/><path d="M153 -125.55 L836 268.88"/><path d="M153 -87.99 L836 306.44"/><path d="M153 -50.43 L836 344.00"/><path d="M153 -12.87 L836 381.56"/><path d="M153 24.69 L836 419.12"/><path d="M153 62.25 L836 456.68"/><path d="M153 99.81 L836 494.24"/><path d="M153 137.47 L836 -256.96"/><path d="M153 137.37 L836 531.80"/><path d="M153 175.03 L836 -219.40"/><path d="M153 174.93 L836 569.36"/><path d="M153 212.59 L836 -181.84"/><path d="M153 212.49 L836 606.92"/><path d="M153 250.15 L836 -144.28"/><path d="M153 250.05 L836 644.48"/><path d="M153 287.71 L836 -106.72"/><path d="M153 287.61 L836 682.04"/><path d="M153 325.27 L836 -69.16"/><path d="M153 325.17 L836 719.60"/><path d="M153 362.83 L836 -31.60"/><path d="M153 362.73 L836 757.16"/><path d="M153 400.39 L836 5.96"/><path d="M153 400.29 L836 794.72"/><path d="M153 437.95 L836 43.52"/><path d="M153 437.85 L836 832.28"/><path d="M153 475.51 L836 81.08"/><path d="M153 475.41 L836 869.84"/><path d="M153 513.07 L836 118.64"/><path d="M153 512.97 L836 907.40"/><path d="M153 550.63 L836 156.20"/><path d="M153 550.53 L836 944.96"/><path d="M153 588.19 L836 193.76"/><path d="M153 588.09 L836 982.52"/><path d="M153 625.75 L836 231.32"/><path d="M153 625.65 L836 1020.08"/><path d="M153 663.31 L836 268.88"/><path d="M153 663.21 L836 1057.64"/><path d="M153 700.87 L836 306.44"/><path d="M153 700.77 L836 1095.20"/><path d="M153 738.43 L836 344.00"/><path d="M153 738.33 L836 1132.76"/><path d="M153 775.99 L836 381.56"/><path d="M153 775.89 L836 1170.32"/><path d="M153 813.55 L836 419.12"/><path d="M153 851.11 L836 456.68"/><path d="M153 888.67 L836 494.24"/><path d="M153 926.23 L836 531.80"/><path d="M153 963.79 L836 569.36"/><path d="M153 1001.35 L836 606.92"/><path d="M153 1038.91 L836 644.48"/><path d="M153 1076.47 L836 682.04"/><path d="M153 1114.03 L836 719.60"/><path d="M153 1151.59 L836 757.16"/><path d="M153 1189.15 L836 794.72"/></g>
<rect x="426.3" y="160" width="1.9" height="603.8" fill="#484848"/>
</svg>
</div>
<div class="abs" style="left:926px;top:87px;width:17px;height:737px;background:linear-gradient(90deg,#363636,#474747)"></div>
<div class="abs" style="left:943px;top:67px;width:2px;height:774px;background:#2d2d2d"></div>
<div class="abs" style="left:45px;top:824px;width:898px;height:17px;background:linear-gradient(#393939,#4a4a4a)"></div>
<div class="abs" style="left:45px;top:824px;width:256px;height:17px;background:#535353"></div>
<div class="abs" style="left:45px;top:824px;width:48px;height:17px;background:#2d2d2d"></div>
<div class="t" style="left:47px;top:825px;color:#f0f0f0;font-size:11.5px">33.96%</div>
<svg style="left:99px;top:826px" width="13" height="13" viewBox="0 0 13 13"><circle cx="6.5" cy="6.5" r="6" fill="#cfcfcf"/><rect x="3.5" y="3" width="5" height="6" fill="#666"/><rect x="5.5" y="5" width="4.5" height="5" fill="#eee" stroke="#666" stroke-width=".6"/></svg>
<div class="abs" style="left:93px;top:824px;width:1px;height:17px;background:#3a3a3a"></div>
<div class="abs" style="left:119px;top:824px;width:1px;height:17px;background:#3a3a3a"></div>
<div class="t" style="left:152px;top:825px;color:#f0f0f0">文档:11.4M/0 字节</div>
<svg style="left:290px;top:828px" width="7" height="9" viewBox="0 0 7 9"><path d="M0 0L7 4.5L0 9Z" fill="#f0f0f0"/></svg>
<div class="abs" style="left:301px;top:824px;width:1px;height:17px;background:#333"></div>
<div class="abs" style="left:926px;top:824px;width:17px;height:17px;background:#555"></div>
<!-- ===== right dock ===== -->
<div class="abs" style="left:945px;top:67px;width:292px;height:774px;background:#424242;border-left:1px solid #2c2c2c"></div>
<div class="abs" style="left:946px;top:67px;width:291px;height:12px;background:linear-gradient(#3d3d3d,#323232);border-bottom:1px solid #2b2b2b"></div>
<svg style="left:971px;top:70px" width="9" height="6" viewBox="0 0 9 6"><path d="M4 0L0 3L4 6Z M8.5 0L4.5 3L8.5 6Z" fill="#d8d8d8"/></svg>
<svg style="left:1224px;top:70px" width="9" height="6" viewBox="0 0 9 6"><path d="M0 0L4 3L0 6Z M4.5 0L8.5 3L4.5 6Z" fill="#d8d8d8"/></svg>
<!-- icon strip -->
<div class="abs" style="left:946px;top:79px;width:37px;height:762px;background:#535353;border-right:1px solid #383838"></div>
<div class="abs" style="left:946px;top:147px;width:36px;height:2px;background:#383838;border-bottom:1px solid #626262"></div>
<div class="abs" style="left:946px;top:186px;width:36px;height:2px;background:#383838;border-bottom:1px solid #626262"></div>
<div class="abs" style="left:946px;top:258px;width:36px;height:2px;background:#383838;border-bottom:1px solid #626262"></div>
<div class="abs" style="left:954px;top:83px;width:20px;height:3px;background:#3e3e3e;border-bottom:1px solid #666"></div>
<div class="abs" style="left:954px;top:152px;width:20px;height:3px;background:#3e3e3e;border-bottom:1px solid #666"></div>
<div class="abs" style="left:954px;top:192px;width:20px;height:3px;background:#3e3e3e;border-bottom:1px solid #666"></div>
<!-- history icon -->
<svg style="left:958px;top:94px" width="16" height="18" viewBox="0 0 16 18"><rect x=".6" y=".6" width="4.4" height="4.4" fill="none" stroke="#bebebe" stroke-width="1.1"/><rect x=".6" y="6.6" width="4.4" height="4.4" fill="none" stroke="#bebebe" stroke-width="1.1"/><rect x="0" y="12.2" width="5.6" height="5.2" fill="#bebebe"/><path d="M12.4 14 C14.6 10.5 13.4 7 10.4 4.6" fill="none" stroke="#bebebe" stroke-width="1.9"/><path d="M7.6 7 L8.8 1.6 L13.2 4.4Z" fill="#bebebe"/></svg>
<!-- play -->
<svg style="left:957px;top:123px" width="17" height="14" viewBox="0 0 17 14"><path d="M0 0 L17 7 L0 14Z" fill="#bebebe"/></svg>
<!-- info -->
<svg style="left:956px;top:163px" width="18" height="18" viewBox="0 0 18 18"><circle cx="9" cy="9" r="8.5" fill="#bebebe"/><rect x="7.5" y="7.5" width="3" height="6.5" fill="#535353"/><circle cx="9" cy="4.7" r="1.7" fill="#535353"/></svg>
<!-- A| -->
<div class="abs" style="left:957px;top:201px;font-size:16.5px;line-height:20px;color:#c4c4c4">A</div>
<div class="abs" style="left:970px;top:203px;width:1.6px;height:17px;background:#bebebe"></div>
<!-- pilcrow -->
<svg style="left:958px;top:230px" width="12" height="15" viewBox="0 0 12 16"><path d="M4.6 0 H12 V1.8 H11 V16 H9.2 V1.8 H8 V16 H6.2 V9 H4.6 A4.5 4.5 0 0 1 4.6 0Z" fill="#bebebe"/></svg>
<!-- ===== properties panel ===== -->
<div class="abs" style="left:985px;top:79px;width:251px;height:363px;background:#535353;border:1px solid #383838"></div>
<div class="abs" style="left:986px;top:79px;width:249px;height:17px;background:#3a3a3a"></div>
<div class="abs" style="left:986px;top:79px;width:36px;height:17px;background:#535353;border-right:1px solid #2d2d2d"></div>
<div class="t" style="left:993px;top:81px;font-size:11px;color:#e6e6e6">属性</div>
<svg style="left:1217px;top:84px" width="13" height="8" viewBox="0 0 13 8"><path d="M0 1 H5 L2.5 4.5Z" fill="#d0d0d0"/><path d="M6 1 H13 M6 3.5 H13 M6 6 H13" stroke="#d0d0d0" stroke-width="1.2"/></svg>
<!-- mask header -->
<div class="abs" style="left:996px;top:102px;width:21px;height:21px;background:#303030;border-radius:3px"></div>
<div class="abs" style="left:998px;top:105px;width:17px;height:14px;background:linear-gradient(#e4e4e4,#b0b0b0)"></div>
<div class="abs" style="left:1004px;top:109px;width:6px;height:6px;border-radius:50%;background:#3a3a3a"></div>
<div class="t" style="left:1025px;top:106px">蒙版</div>
<div class="abs" style="left:986px;top:130px;width:249px;height:2px;background:#3d3d3d;border-bottom:1px solid #636363"></div>
<!-- right inner gutter -->
<div class="abs" style="left:1220px;top:132px;width:15px;height:290px;background:#444"></div>
<!-- thumb row -->
<div class="abs" style="left:992px;top:138px;width:32px;height:32px;background:#838383;border:1px solid #1c1c1c"></div>
<div class="t" style="left:1030px;top:147px">形状路径</div>
<svg style="left:1169px;top:147px" width="17" height="14" viewBox="0 0 17 14"><rect x="0" y="0.5" width="14" height="11" fill="#cfcfcf"/><circle cx="7" cy="6" r="3" fill="#666"/><rect x="10" y="7" width="7" height="7" fill="#e8e8e8" stroke="#444" stroke-width=".8"/><path d="M13.5 8.5 V12.5 M11.5 10.5 H15.5" stroke="#333" stroke-width="1.1"/></svg>
<div class="abs" style="left:1190px;top:143px;width:22px;height:22px;background:#383838;border-radius:3px"></div>
<svg style="left:1194px;top:147px" width="14" height="14" viewBox="0 0 14 14"><rect x="2" y="2" width="10" height="10" fill="none" stroke="#cfcfcf" stroke-width="1.2"/><g fill="#383838" stroke="#cfcfcf" stroke-width=".9"><rect x=".5" y=".5" width="3" height="3"/><rect x="10.5" y=".5" width="3" height="3"/><rect x=".5" y="10.5" width="3" height="3"/><rect x="10.5" y="10.5" width="3" height="3"/></g></svg>
<div class="abs" style="left:986px;top:185px;width:234px;height:2px;background:#3d3d3d;border-bottom:1px solid #636363"></div>
<!-- density -->
<div class="t" style="left:998px;top:205px">浓度:</div>
<div class="fld" style="left:1153px;top:203px;width:54px;height:19px;line-height:17px">100%</div>
<div class="abs" style="left:999px;top:226px;width:208px;height:4px;background:#3a3a3a;border-radius:2px;border-bottom:1px solid #666"></div>
<svg style="left:1201px;top:223px" width="11" height="10" viewBox="0 0 11 10"><path d="M5.5 0.5 L10.5 6 V9.5 H0.5 V6Z" fill="#b8b8b8" stroke="#3a3a3a" stroke-width=".8"/></svg>
<!-- feather -->
<div class="t" style="left:998px;top:260px">羽化:</div>
<div class="fld" style="left:1153px;top:258px;width:54px;height:19px;line-height:17px">0.0 像素</div>
<div class="abs" style="left:995px;top:281px;width:212px;height:4px;background:#3a3a3a;border-radius:2px;border-bottom:1px solid #666"></div>
<svg style="left:993px;top:278px" width="11" height="10" viewBox="0 0 11 10"><path d="M5.5 0.5 L10.5 6 V9.5 H0.5 V6Z" fill="#b8b8b8" stroke="#3a3a3a" stroke-width=".8"/></svg>
<!-- adjust -->
<div class="t dim" style="left:993px;top:312px">调整:</div>
<div class="btn" style="left:1110px;top:313px;width:102px;height:19px;line-height:16px;text-align:center;color:#9d9d9d;border-color:#444;background:linear-gradient(#616161,#565656);box-shadow:inset 0 1px 0 #6c6c6c">蒙版边缘...</div>
<div class="btn" style="left:1110px;top:342px;width:102px;height:19px;line-height:16px;text-align:center;color:#9d9d9d;border-color:#444;background:linear-gradient(#616161,#565656);box-shadow:inset 0 1px 0 #6c6c6c">颜色范围...</div>
<div class="btn" style="left:1110px;top:371px;width:102px;height:19px;line-height:16px;text-align:center;color:#9d9d9d;border-color:#444;background:linear-gradient(#616161,#565656);box-shadow:inset 0 1px 0 #6c6c6c">反相</div>
<!-- footer -->
<div class="abs" style="left:986px;top:422px;width:249px;height:19px;background:#535353;border-top:1px solid #3a3a3a"></div>
<svg style="left:1104px;top:426px" width="13" height="13" viewBox="0 0 13 13"><circle cx="6.5" cy="6.5" r="5" fill="none" stroke="#d2d2d2" stroke-width="1.8" stroke-dasharray="2 1.93"/></svg>
<svg style="left:1130px;top:426px" width="16" height="13" viewBox="0 0 16 13"><path d="M8 3 L15 8 L8 12.5 L1 8Z" fill="#7a7a7a"/><path d="M8 0 V7 M5.5 5 L8 8 L10.5 5" stroke="#8a8a8a" stroke-width="1.5" fill="none"/></svg>
<div class="abs" style="left:1157px;top:423px;width:29px;height:18px;background:#3b3b3b"></div>
<svg style="left:1164px;top:428px" width="14" height="9" viewBox="0 0 14 9"><path d="M0.3 4.5 C3.5 -1 10.5 -1 13.7 4.5 C10.5 10 3.5 10 0.3 4.5Z" fill="#bdbdbd"/><circle cx="7" cy="4.3" r="2.6" fill="#333"/><circle cx="6.1" cy="3.4" r=".9" fill="#d8d8d8"/></svg>
<svg style="left:1224px;top:430px" width="10" height="10" viewBox="0 0 10 10"><path d="M9.5 1 V10 M6.5 4 V10 M3.5 7 V10" stroke="#676767" stroke-width="1"/></svg>
<svg style="left:1194px;top:426px" width="12" height="13" viewBox="0 0 12 13"><path d="M0 2.5 H12 M4 2.5 V0.8 H8 V2.5" stroke="#808080" stroke-width="1.4" fill="none"/><path d="M1.5 4 H10.5 L9.5 13 H2.5Z" fill="#808080"/></svg>
<!-- ===== layers panel ===== -->
<div class="abs" style="left:985px;top:445px;width:251px;height:396px;background:#535353;border:1px solid #383838"></div>
<div class="abs" style="left:986px;top:445px;width:249px;height:16px;background:#3a3a3a"></div>
<div class="abs" style="left:986px;top:445px;width:37px;height:16px;background:#535353;border-right:1px solid #2d2d2d"></div>
<div class="abs" style="left:1023px;top:446px;width:37px;height:15px;background:#464646;border-right:1px solid #2d2d2d"></div>
<div class="abs" style="left:1060px;top:446px;width:38px;height:15px;background:#464646;border-right:1px solid #2d2d2d"></div>
<div class="t" style="left:993px;top:446px;font-size:11px;color:#e6e6e6">图层</div>
<div class="t" style="left:1030px;top:446px;font-size:11px;color:#a4a4a4">通道</div>
<div class="t" style="left:1068px;top:446px;font-size:11px;color:#a4a4a4">路径</div>
<svg style="left:1217px;top:449px" width="13" height="8" viewBox="0 0 13 8"><path d="M0 1 H5 L2.5 4.5Z" fill="#d0d0d0"/><path d="M6 1 H13 M6 3.5 H13 M6 6 H13" stroke="#d0d0d0" stroke-width="1.2"/></svg>
<!-- filter row -->
<div class="btn" style="left:990px;top:465px;width:70px;height:20px;line-height:17px;padding-left:21px;font-weight:bold">类型</div>
<svg style="left:995px;top:469px" width="11" height="11" viewBox="0 0 11 11"><circle cx="6.3" cy="4.3" r="3.2" fill="none" stroke="#e8e8e8" stroke-width="1.4"/><path d="M4 6.8 L1 10" stroke="#e8e8e8" stroke-width="1.6"/></svg>
<div class="ud" style="left:1048px;top:469px"></div>
<svg style="left:1081px;top:469px" width="14" height="12" viewBox="0 0 14 12"><rect x=".6" y=".6" width="12.8" height="10.8" fill="none" stroke="#b8b8b8" stroke-width="1.2"/><path d="M2.5 9.5 L5.5 5.5 L8 8 L9.5 6.5 L11.5 9.5Z" fill="#b8b8b8"/><circle cx="10" cy="3.5" r="1" fill="#b8b8b8"/></svg>
<svg style="left:1105px;top:469px" width="12" height="12" viewBox="0 0 12 12"><circle cx="6" cy="6" r="5.4" fill="#b8b8b8"/><path d="M9.8 2.2 A5.4 5.4 0 0 1 2.2 9.8Z" fill="#555"/></svg>
<div class="abs" style="left:1129px;top:466px;width:13px;height:18px;font-family:'Liberation Serif',serif;font-size:17px;line-height:18px;color:#b8b8b8;text-align:center">T</div>
<svg style="left:1153px;top:469px" width="13" height="12" viewBox="0 0 13 12"><rect x="2" y="2" width="9" height="8" fill="none" stroke="#b8b8b8" stroke-width="1.2"/><g fill="#535353" stroke="#b8b8b8" stroke-width=".9"><rect x=".5" y=".5" width="3" height="3"/><rect x="9.5" y=".5" width="3" height="3"/><rect x=".5" y="8.5" width="3" height="3"/><rect x="9.5" y="8.5" width="3" height="3"/></g></svg>
<svg style="left:1177px;top:468px" width="13" height="14" viewBox="0 0 13 14"><path d="M4 .6 H9 L12.4 4 V10 H4Z" fill="none" stroke="#b8b8b8" stroke-width="1.2"/><path d="M9 .6 V4 H12.4" fill="none" stroke="#b8b8b8" stroke-width="1"/><rect x=".5" y="7" width="6.5" height="6.5" fill="#b8b8b8"/></svg>
<div class="abs" style="left:1212px;top:466px;width:9px;height:17px;background:#2f2f2f;border:1px solid #2a2a2a;border-radius:1px"></div>
<div class="abs" style="left:1213px;top:467px;width:7px;height:7px;background:linear-gradient(#9a9a9a,#6a6a6a)"></div>
<div class="abs" style="left:986px;top:488px;width:249px;height:2px;background:#424242;border-bottom:1px solid #5e5e5e"></div>
<!-- blend row -->
<div class="btn" style="left:990px;top:493px;width:110px;height:20px;line-height:17px;padding-left:8px">正常</div>
<div class="ud" style="left:1089px;top:497px"></div>
<div class="t" style="left:1108px;top:496px">不透明度:</div>
<div class="fld" style="left:1165px;top:493px;width:37px;height:20px;padding-left:3px">100%</div>
<div class="btn" style="left:1201px;top:493px;width:20px;height:20px;border-radius:0 3px 3px 0"></div>
<div class="dn" style="left:1208px;top:501px"></div>
<div class="abs" style="left:986px;top:515px;width:249px;height:2px;background:#464646;border-bottom:1px solid #5b5b5b"></div>
<!-- lock row -->
<div class="t" style="left:992px;top:524px">锁定:</div>
<svg style="left:1029px;top:526px" width="11" height="11" viewBox="0 0 11 11"><rect width="11" height="11" fill="#7a7a7a"/><path d="M0 0h3.7v3.7H0z M7.3 0H11v3.7H7.3z M3.7 3.7h3.6v3.6H3.7z M0 7.3h3.7V11H0z M7.3 7.3H11V11H7.3z" fill="#9c9c9c"/></svg>
<svg style="left:1050px;top:524px" width="16" height="14" viewBox="0 0 16 14"><path d="M14.5 0.5 L15.5 1.5 L7.5 9.5 L5.5 7.5Z" fill="#8c8c8c"/><path d="M5 8 L7 10 C6 12.5 3 13.5 .5 13 C2.5 12 2.5 9 5 8Z" fill="#8c8c8c"/></svg>
<svg style="left:1072px;top:524px" width="14" height="14" viewBox="0 0 14 14"><path d="M7 1 V13 M1 7 H13" stroke="#d6d6d6" stroke-width="1.3"/><path d="M7 0 L4.8 2.8 H9.2Z M7 14 L4.8 11.2 H9.2Z M0 7 L2.8 4.8 V9.2Z M14 7 L11.2 4.8 V9.2Z" fill="#d6d6d6"/></svg>
<svg style="left:1095px;top:524px" width="11" height="13" viewBox="0 0 11 13"><path d="M2.8 6 V3.8 a2.7 2.7 0 0 1 5.4 0 V6" fill="none" stroke="#d6d6d6" stroke-width="1.5"/><rect x=".5" y="5.8" width="10" height="7" rx="1" fill="#d6d6d6"/><rect x="4.7" y="8" width="1.6" height="2.6" fill="#555"/></svg>
<div class="t" style="left:1132px;top:524px">填充:</div>
<div class="fld" style="left:1165px;top:521px;width:37px;height:20px;padding-left:3px">100%</div>
<div class="btn" style="left:1201px;top:521px;width:20px;height:20px;border-radius:0 3px 3px 0"></div>
<div class="dn" style="left:1208px;top:529px"></div>
<!-- layer list -->
<div class="abs" style="left:986px;top:547px;width:235px;height:275px;background:#535353;border-top:1px solid #3a3a3a;overflow:hidden">
<svg style="left:0;top:0" width="0" height="0"><defs><pattern id="chk" x="1" y="1" width="8" height="8" patternUnits="userSpaceOnUse"><rect width="8" height="8" fill="#fff"/><rect x="4" width="4" height="4" fill="#ccc"/><rect y="4" width="4" height="4" fill="#ccc"/></pattern></defs></svg>
<div class="abs" style="left:0;top:0px;width:235px;height:23px;border-bottom:1px solid #3b3b3b"></div>
<svg style="left:10px;top:7px" width="12" height="8" viewBox="0 0 12 8"><path d="M0.2 4 C3 -0.8 9 -0.8 11.8 4 C9 8.8 3 8.8 0.2 4Z" fill="#a4a4a4"/><ellipse cx="6" cy="4" rx="4.2" ry="2.7" fill="#6a6a6a"/><circle cx="6" cy="3.8" r="2.1" fill="#2e2e2e"/><circle cx="5.2" cy="3" r=".8" fill="#cfcfcf"/></svg>
<svg style="left:34px;top:8px" width="9" height="7" viewBox="0 0 9 7"><path d="M0 0H9L4.5 7Z" fill="#efefef"/></svg>
<svg style="left:46px;top:4px" width="18" height="13" viewBox="0 0 18 13"><path d="M2 0.5 H7 L8.5 2.5 H15 V5 H2Z" fill="#9a9a9a"/><path d="M0 5 H18 L16 12.5 H2Z" fill="#d2d2d2"/></svg>
<div class="t" style="left:74px;top:5px;font-size:12px">透视网格</div>
<div class="abs" style="left:0;top:23px;width:235px;height:39px;border-bottom:1px solid #3b3b3b"></div>
<svg style="left:10px;top:38px" width="12" height="8" viewBox="0 0 12 8"><path d="M0.2 4 C3 -0.8 9 -0.8 11.8 4 C9 8.8 3 8.8 0.2 4Z" fill="#a4a4a4"/><ellipse cx="6" cy="4" rx="4.2" ry="2.7" fill="#6a6a6a"/><circle cx="6" cy="3.8" r="2.1" fill="#2e2e2e"/><circle cx="5.2" cy="3" r=".8" fill="#cfcfcf"/></svg>
<svg style="left:49px;top:25px" width="33" height="32" viewBox="0 0 33 32"><path d="M1 1 H31.5 V18 H18 V30.5 H1Z" fill="url(#chk)" stroke="#151515" stroke-width="1.2"/></svg>
<svg style="left:69px;top:44px" width="11" height="11" viewBox="0 0 13 13"><rect x="2" y="2" width="9" height="9" fill="#535353" stroke="#c4c4c4" stroke-width="1.1"/><g fill="#535353" stroke="#c4c4c4" stroke-width="1"><rect x=".5" y=".5" width="3" height="3"/><rect x="9.5" y=".5" width="3" height="3"/><rect x=".5" y="9.5" width="3" height="3"/><rect x="9.5" y="9.5" width="3" height="3"/></g></svg>
<div class="t" style="left:91px;top:35px;font-size:12px">形状 1 副本</div>
<div class="abs" style="left:0;top:62px;width:235px;height:39px;border-bottom:1px solid #3b3b3b"></div>
<svg style="left:10px;top:77px" width="12" height="8" viewBox="0 0 12 8"><path d="M0.2 4 C3 -0.8 9 -0.8 11.8 4 C9 8.8 3 8.8 0.2 4Z" fill="#a4a4a4"/><ellipse cx="6" cy="4" rx="4.2" ry="2.7" fill="#6a6a6a"/><circle cx="6" cy="3.8" r="2.1" fill="#2e2e2e"/><circle cx="5.2" cy="3" r=".8" fill="#cfcfcf"/></svg>
<svg style="left:49px;top:64px" width="33" height="32" viewBox="0 0 33 32"><path d="M1 1 H31.5 V18 H18 V30.5 H1Z" fill="url(#chk)" stroke="#151515" stroke-width="1.2"/></svg>
<svg style="left:69px;top:83px" width="11" height="11" viewBox="0 0 13 13"><rect x="2" y="2" width="9" height="9" fill="#535353" stroke="#c4c4c4" stroke-width="1.1"/><g fill="#535353" stroke="#c4c4c4" stroke-width="1"><rect x=".5" y=".5" width="3" height="3"/><rect x="9.5" y=".5" width="3" height="3"/><rect x=".5" y="9.5" width="3" height="3"/><rect x="9.5" y="9.5" width="3" height="3"/></g></svg>
<div class="t" style="left:91px;top:74px;font-size:12px">形状 1 副本 2</div>
<div class="abs" style="left:0;top:101px;width:235px;height:38px;border-bottom:1px solid #3b3b3b"></div>
<svg style="left:10px;top:116px" width="12" height="8" viewBox="0 0 12 8"><path d="M0.2 4 C3 -0.8 9 -0.8 11.8 4 C9 8.8 3 8.8 0.2 4Z" fill="#a4a4a4"/><ellipse cx="6" cy="4" rx="4.2" ry="2.7" fill="#6a6a6a"/><circle cx="6" cy="3.8" r="2.1" fill="#2e2e2e"/><circle cx="5.2" cy="3" r=".8" fill="#cfcfcf"/></svg>
<svg style="left:49px;top:103px" width="33" height="32" viewBox="0 0 33 32"><path d="M1 1 H31.5 V18 H18 V30.5 H1Z" fill="url(#chk)" stroke="#151515" stroke-width="1.2"/></svg>
<svg style="left:69px;top:122px" width="11" height="11" viewBox="0 0 13 13"><rect x="2" y="2" width="9" height="9" fill="#535353" stroke="#c4c4c4" stroke-width="1.1"/><g fill="#535353" stroke="#c4c4c4" stroke-width="1"><rect x=".5" y=".5" width="3" height="3"/><rect x="9.5" y=".5" width="3" height="3"/><rect x=".5" y="9.5" width="3" height="3"/><rect x="9.5" y="9.5" width="3" height="3"/></g></svg>
<div class="t" style="left:91px;top:113px;font-size:12px">形状 1</div>
<div class="abs" style="left:0;top:139px;width:235px;height:24px;border-bottom:1px solid #3b3b3b"></div>
<div class="abs" style="left:8px;top:144px;width:13px;height:13px;background:#585858;border:1px solid #424242"></div>
<svg style="left:35px;top:146px" width="7" height="9" viewBox="0 0 7 9"><path d="M0 0L7 4.5L0 9Z" fill="#efefef"/></svg>
<svg style="left:47px;top:144px" width="15" height="13" viewBox="0 0 15 13"><path d="M0 0.5 H6 L7.5 2.5 H15 V12.5 H0Z" fill="#bdbdbd"/><path d="M0 4 H15" stroke="#999" stroke-width="1"/></svg>
<div class="t" style="left:74px;top:145px;font-size:12px">手机</div>
<div class="abs" style="left:0;top:163px;width:235px;height:22px;border-bottom:1px solid #3b3b3b"></div>
<svg style="left:10px;top:170px" width="12" height="8" viewBox="0 0 12 8"><path d="M0.2 4 C3 -0.8 9 -0.8 11.8 4 C9 8.8 3 8.8 0.2 4Z" fill="#a4a4a4"/><ellipse cx="6" cy="4" rx="4.2" ry="2.7" fill="#6a6a6a"/><circle cx="6" cy="3.8" r="2.1" fill="#2e2e2e"/><circle cx="5.2" cy="3" r=".8" fill="#cfcfcf"/></svg>
<svg style="left:34px;top:171px" width="9" height="7" viewBox="0 0 9 7"><path d="M0 0H9L4.5 7Z" fill="#efefef"/></svg>
<svg style="left:46px;top:167px" width="18" height="13" viewBox="0 0 18 13"><path d="M2 0.5 H7 L8.5 2.5 H15 V5 H2Z" fill="#9a9a9a"/><path d="M0 5 H18 L16 12.5 H2Z" fill="#d2d2d2"/></svg>
<div class="t" style="left:74px;top:168px;font-size:12px">公路</div>
<div class="abs" style="left:0;top:185px;width:235px;height:39px;border-bottom:1px solid #3b3b3b"></div>
<div class="abs" style="left:30px;top:185px;width:205px;height:38px;background:#596679"></div>
<svg style="left:10px;top:200px" width="12" height="8" viewBox="0 0 12 8"><path d="M0.2 4 C3 -0.8 9 -0.8 11.8 4 C9 8.8 3 8.8 0.2 4Z" fill="#a4a4a4"/><ellipse cx="6" cy="4" rx="4.2" ry="2.7" fill="#6a6a6a"/><circle cx="6" cy="3.8" r="2.1" fill="#2e2e2e"/><circle cx="5.2" cy="3" r=".8" fill="#cfcfcf"/></svg>
<svg style="left:47px;top:195px" width="21" height="21" viewBox="0 0 21 21"><path d="M.7 5.5 V.7 H6 M14.5 .7 H20.3 V5.5 M20.3 15 V20.3 H14.5 M6 20.3 H.7 V15" fill="none" stroke="#f4f4f4" stroke-width="1.3"/><path d="M4.6 17 V4.6 H18" fill="none" stroke="#161616" stroke-width="1.6"/><path d="M3.2 17 V3.2 H18" fill="none" stroke="#ececec" stroke-width="1"/></svg>
<svg style="left:53px;top:201px" width="11" height="11" viewBox="0 0 13 13"><rect x="2" y="2" width="9" height="9" fill="#596679" stroke="#c4c4c4" stroke-width="1.1"/><g fill="#596679" stroke="#c4c4c4" stroke-width="1"><rect x=".5" y=".5" width="3" height="3"/><rect x="9.5" y=".5" width="3" height="3"/><rect x=".5" y="9.5" width="3" height="3"/><rect x="9.5" y="9.5" width="3" height="3"/></g></svg>
<div class="t" style="left:75px;top:197px;font-size:12px">形状 2</div>
<div class="abs" style="left:0;top:224px;width:235px;height:39px;border-bottom:1px solid #3b3b3b"></div>
<svg style="left:10px;top:239px" width="12" height="8" viewBox="0 0 12 8"><path d="M0.2 4 C3 -0.8 9 -0.8 11.8 4 C9 8.8 3 8.8 0.2 4Z" fill="#a4a4a4"/><ellipse cx="6" cy="4" rx="4.2" ry="2.7" fill="#6a6a6a"/><circle cx="6" cy="3.8" r="2.1" fill="#2e2e2e"/><circle cx="5.2" cy="3" r=".8" fill="#cfcfcf"/></svg>
<svg style="left:49px;top:236px" width="17" height="16" viewBox="0 0 17 16"><path d="M2.6 15 V2.6 H16" fill="none" stroke="#141414" stroke-width="1.8"/><path d="M1 15 V1 H16" fill="none" stroke="#e4e4e4" stroke-width="1"/></svg>
<svg style="left:53px;top:240px" width="11" height="11" viewBox="0 0 13 13"><rect x="2" y="2" width="9" height="9" fill="#535353" stroke="#c4c4c4" stroke-width="1.1"/><g fill="#535353" stroke="#c4c4c4" stroke-width="1"><rect x=".5" y=".5" width="3" height="3"/><rect x="9.5" y=".5" width="3" height="3"/><rect x=".5" y="9.5" width="3" height="3"/><rect x="9.5" y="9.5" width="3" height="3"/></g></svg>
<div class="t" style="left:75px;top:236px;font-size:12px">矩形 2</div>
<div class="abs" style="left:0;top:263px;width:235px;height:20px;border-bottom:1px solid #3b3b3b"></div>
<div class="abs" style="left:34px;top:267px;width:32px;height:20px;background:#ffb6b8;border:1px solid #222"></div>
<div class="abs" style="left:30px;top:0;width:1px;height:275px;background:#3f3f3f"></div>
</div>
<div class="abs" style="left:1221px;top:547px;width:14px;height:275px;background:#424242;border-left:1px solid #383838;border-top:1px solid #3a3a3a"></div>
<div class="abs" style="left:1221px;top:564px;width:14px;height:190px;background:linear-gradient(90deg,#8f8f8f,#6d6d6d);border-radius:4px;border:1px solid #3c3c3c"></div>
<svg style="left:1225px;top:554px" width="7" height="3.4" viewBox="0 0 7 4" preserveAspectRatio="none"><path d="M0 4 L3.5 0 L7 4Z" fill="#e6e6e6"/></svg>
<svg style="left:1225px;top:812px" width="7" height="3.4" viewBox="0 0 7 4" preserveAspectRatio="none"><path d="M0 0 L3.5 4 L7 0Z" fill="#e6e6e6"/></svg>
<div class="abs" style="left:986px;top:822px;width:249px;height:18px;background:#535353;border-top:1px solid #3a3a3a"></div>
<svg style="left:1032px;top:827px" width="15" height="9" viewBox="0 0 15 9"><rect x=".7" y="1.7" width="7" height="5.6" rx="2.8" fill="none" stroke="#868686" stroke-width="1.4"/><rect x="7.3" y="1.7" width="7" height="5.6" rx="2.8" fill="none" stroke="#868686" stroke-width="1.4"/></svg>
<div class="abs" style="left:1060px;top:822px;font-size:15px;line-height:18px;font-style:italic;font-family:'Liberation Serif',serif;color:#bdbdbd">fx</div>
<div class="abs" style="left:1075px;top:836px;width:2px;height:2px;background:#bdbdbd"></div>
<svg style="left:1087px;top:826px" width="14" height="11" viewBox="0 0 14 11"><rect width="14" height="11" fill="#b9b9b9"/><circle cx="7" cy="5.5" r="3" fill="#444"/></svg>
<svg style="left:1114px;top:825px" width="13" height="13" viewBox="0 0 13 13"><circle cx="6.5" cy="6.5" r="5.8" fill="#b9b9b9"/><path d="M10.6 2.4 A5.8 5.8 0 0 1 2.4 10.6Z" fill="#555"/></svg>
<div class="abs" style="left:1129px;top:836px;width:2px;height:2px;background:#bdbdbd"></div>
<svg style="left:1141px;top:826px" width="14" height="11" viewBox="0 0 14 11"><path d="M0 0 H5.5 L7 2 H14 V11 H0Z" fill="#b9b9b9"/></svg>
<svg style="left:1168px;top:826px" width="12" height="12" viewBox="0 0 12 12"><path d="M1 0 H12 V12 H6 L1 7Z" fill="#b9b9b9"/><path d="M1 7 H6 V12Z" fill="#6e6e6e"/></svg>
<svg style="left:1195px;top:825px" width="12" height="13" viewBox="0 0 12 13"><path d="M0 2.5 H12 M4 2.5 V0.8 H8 V2.5" stroke="#b9b9b9" stroke-width="1.4" fill="none"/><path d="M1.5 4 H10.5 L9.5 13 H2.5Z" fill="#b9b9b9"/><path d="M4.5 5 V12 M7.5 5 V12" stroke="#555" stroke-width=".9"/></svg>
<div class="abs" style="left:1px;top:840px;width:1238px;height:4px;background:#585858;border-top:1px solid #2c2c2c"></div>
</div>
</body>
</html>
